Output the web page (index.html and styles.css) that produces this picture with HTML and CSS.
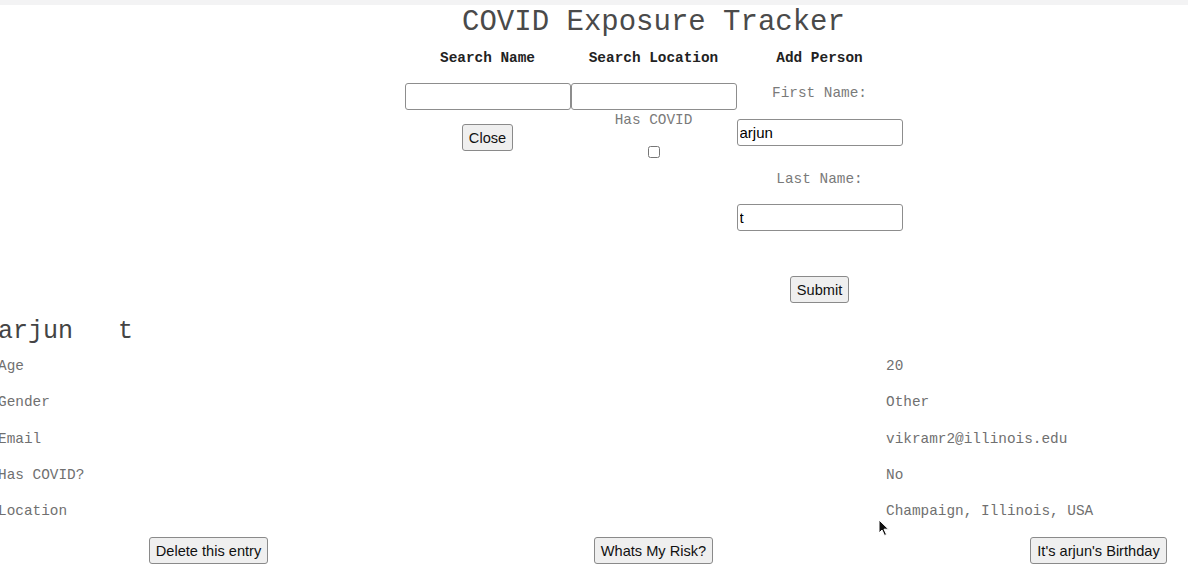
FILE: index.html
```html
<!DOCTYPE html>
<html>
<head>
<meta charset="utf-8">
<title>COVID Exposure Tracker</title>
<link rel="stylesheet" href="styles.css">
</head>
<body>
<div class="topbar"></div>
<div class="page">
  <h1 class="title">COVID Exposure Tracker</h1>
  <div class="forms">
    <div class="col">
      <div class="head">Search Name</div>
      <input class="field" type="text">
      <button class="btn close-btn">Close</button>
    </div>
    <div class="col">
      <div class="head">Search Location</div>
      <input class="field" type="text">
      <div class="label">Has COVID</div>
      <input class="check" type="checkbox">
    </div>
    <div class="col">
      <div class="head">Add Person</div>
      <div class="label">First Name:</div>
      <input class="field first" type="text" value="arjun">
      <div class="label last-label">Last Name:</div>
      <input class="field last" type="text" value="t">
      <button class="btn submit-btn">Submit</button>
    </div>
  </div>

  <div class="person">
    <div class="name"><span>arjun</span><span class="lname">t</span></div>
    <div class="details">
      <div class="k">Age</div><div class="v">20</div>
      <div class="k">Gender</div><div class="v">Other</div>
      <div class="k">Email</div><div class="v">vikramr2@illinois.edu</div>
      <div class="k">Has COVID?</div><div class="v">No</div>
      <div class="k">Location</div><div class="v">Champaign, Illinois, USA</div>
    </div>
    <div class="actions">
      <div class="cell"><button class="btn">Delete this entry</button></div>
      <div class="cell"><button class="btn">Whats My Risk?</button></div>
      <div class="cell"><button class="btn">It's arjun's Birthday</button></div>
    </div>
  </div>
</div>
<svg class="cursor" width="12" height="18" viewBox="0 0 12 18"><path d="M1 1 L1 14 L4 11 L6.5 16.5 L8.5 15.5 L6 10.2 L10.5 10.2 Z" fill="#111" stroke="#fff" stroke-width="1"/></svg>
</body>
</html>
```
FILE: styles.css
```css
html, body {
  margin: 0;
  padding: 0;
  background: #fff;
  overflow: hidden;
}
body {
  position: relative;
  width: 1188px;
  height: 581px;
  font-family: "Courier New", "Nimbus Mono PS", "FreeMono", "Liberation Mono", monospace;
}
.topbar {
  height: 5px;
  background: #f3f3f4;
}
.page {
  width: 1335px;
  margin-left: -14px;
}
.title {
  margin: 2px 0 0;
  font-weight: normal;
  font-size: 29px;
  line-height: 32px;
  text-align: center;
  color: #4a4a4a;
}
.forms {
  display: flex;
  justify-content: center;
  margin-top: 9px;
}
.col {
  width: 166px;
  display: flex;
  flex-direction: column;
  align-items: center;
}
.head {
  font-weight: bold;
  font-size: 14.4px;
  line-height: 20px;
  color: #222;
  margin-bottom: 15px;
}
.field {
  box-sizing: border-box;
  width: 166px;
  height: 27px;
  margin: 0;
  border: 1px solid #8d8d8d;
  border-radius: 3px;
  padding: 0 2px;
  font-family: "Liberation Sans", Arial, sans-serif;
  font-size: 15px;
  color: #000;
  background: #fff;
}
.label {
  font-size: 14.4px;
  line-height: 20px;
  color: #7a7a7a;
}
.first { margin-top: 16px; }
.last-label { margin-top: 23px; }
.last { margin-top: 15px; }
.check {
  margin: 16px 0 0;
  width: 12px;
  height: 12px;
}
.btn {
  box-sizing: border-box;
  height: 27px;
  margin: 0;
  padding: 0 6px;
  font-family: "Liberation Sans", Arial, sans-serif;
  font-size: 14.6px;
  color: #111;
  background: #efefef;
  border: 1px solid #8a8a8a;
  border-radius: 3px;
}
.close-btn { margin-top: 14px; }
.submit-btn { margin-top: 45px; }
.person {
  margin-top: 13px;
  padding-left: 12px;
}
.name {
  font-size: 25px;
  line-height: 32px;
  color: #444;
  display: flex;
  gap: 45px;
}
.details {
  display: grid;
  grid-template-columns: 888px auto;
  grid-auto-rows: 36.25px;
  align-items: center;
  font-size: 14.4px;
  color: #707070;
}
.actions {
  display: grid;
  grid-template-columns: repeat(3, 445px);
  margin-left: -12px;
  margin-top: 8px;
}
.cell {
  display: flex;
  justify-content: center;
}
.cursor {
  position: absolute;
  left: 878px;
  top: 519px;
}
```
